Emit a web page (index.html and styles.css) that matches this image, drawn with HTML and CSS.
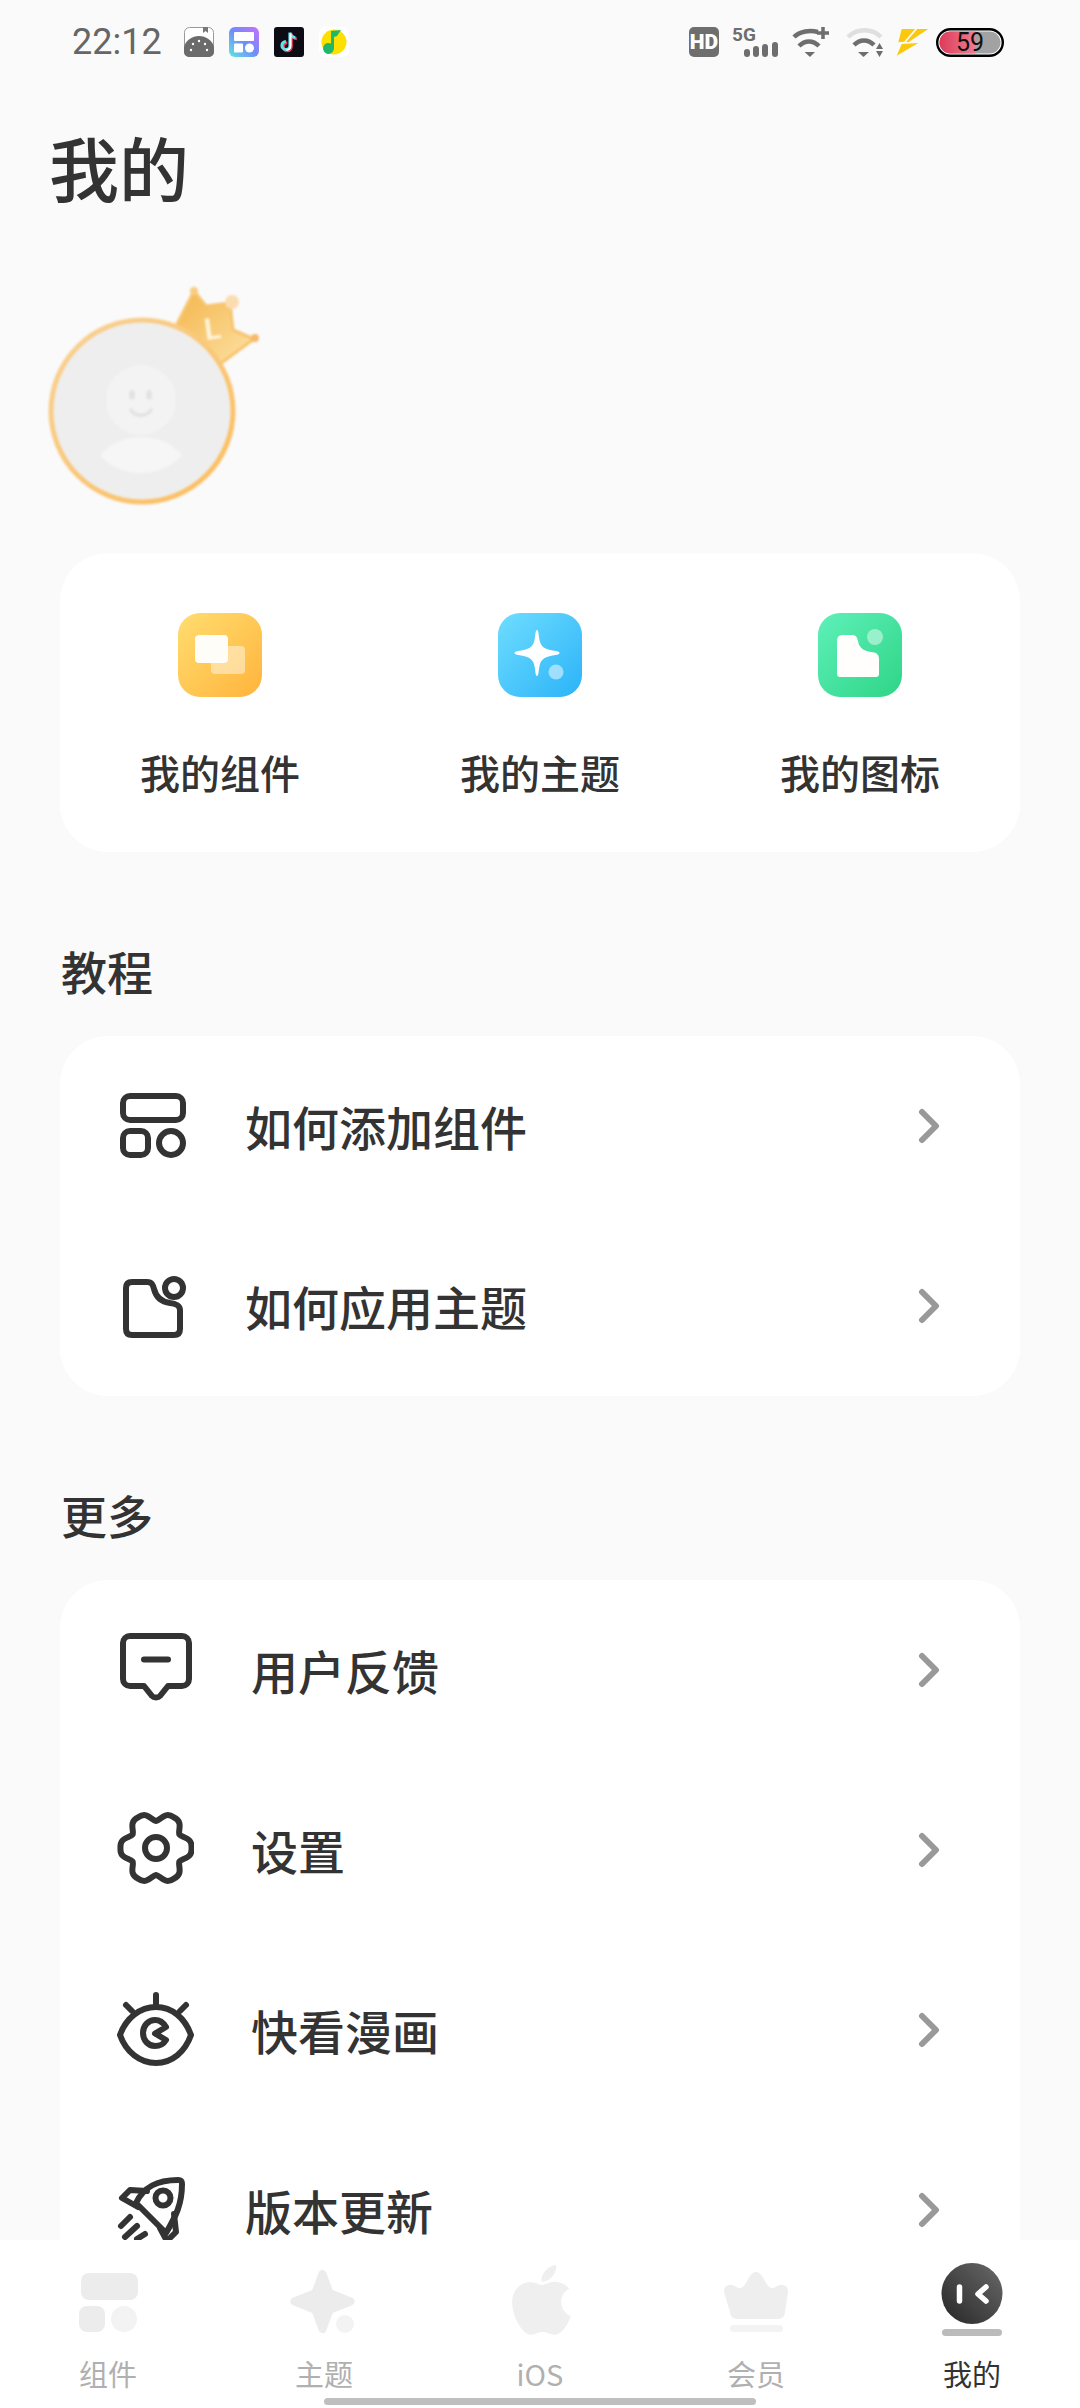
FILE: index.html
```html
<!DOCTYPE html>
<html lang="zh-CN">
<head>
  <meta charset="UTF-8" />
  <meta name="viewport" content="width=device-width, initial-scale=1.0" />
  <title>我的</title>
  <link rel="stylesheet" href="styles.css">
</head>
<body>
  <div id="page">
    <div id="scroll">
      <div id="status">
        <span class="time">22:12</span>
        <div class="status-apps">
          <svg width="30" height="30" viewBox="0 0 30 30"><rect x="0.5" y="0.5" width="29" height="29" rx="5" fill="#fff" stroke="#999"/><path d="M19 0h5v6l-2.500-2-2.500 2z" fill="#777"/><path d="M0 25v-5C2 13 8 9 15 9s13 4 15 11v5a5 5 0 0 1-5 5H5a5 5 0 0 1-5-5z" fill="#6b6b6b"/><g fill="#fff"><circle cx="15" cy="14" r="1.200"/><circle cx="9" cy="17" r="1.200"/><circle cx="21" cy="17" r="1.200"/><circle cx="7" cy="23" r="1.200"/><circle cx="23" cy="23" r="1.200"/></g></svg>
          <svg width="30" height="30" viewBox="0 0 30 30"><defs><linearGradient id="appA" x1="1" y1="0" x2="0" y2="1"><stop offset="0" stop-color="#c870f8"/><stop offset="0.5" stop-color="#6f8cfb"/><stop offset="1" stop-color="#5fe8e0"/></linearGradient></defs><rect width="30" height="30" rx="6" fill="url(#appA)"/><rect x="5" y="5" width="20" height="9" rx="1" fill="#fff"/><rect x="5" y="16.500" width="9" height="9" rx="1" fill="#fff"/><circle cx="20.500" cy="21" r="4.500" fill="#fff"/></svg>
          <svg width="30" height="30" viewBox="0 0 30 30"><rect width="30" height="30" rx="3" fill="#0c0c14"/><path d="M16.500 6v13a4 4 0 1 1-4-4M16.500 6c.5 3 3 5 5.500 5" fill="none" stroke="#f0385a" stroke-width="3" transform="translate(.8 .8)"/><path d="M16.500 6v13a4 4 0 1 1-4-4M16.500 6c.5 3 3 5 5.500 5" fill="none" stroke="#5fe6ea" stroke-width="3" transform="translate(-.6 -.6)"/><path d="M16.500 6.500v12.500a4 4 0 0 1-4 4" fill="none" stroke="#fff" stroke-width="2"/></svg>
          <svg width="30" height="30" viewBox="0 0 30 30"><rect width="30" height="30" rx="6" fill="#fff"/><circle cx="15" cy="15" r="12.500" fill="#fde000"/><path d="M12 4l10-1-4 6-3 1v11a5.500 5.500 0 1 1-3-4.500z" fill="#1fb869"/></svg>
        </div>
        <div class="status-right">
          <svg width="30" height="30" viewBox="0 0 30 30"><rect width="30" height="30" rx="5" fill="#6e6e6e"/><text x="15" y="22" text-anchor="middle" class="hd-text">HD</text></svg>
          <svg width="47" height="30" viewBox="0 0 47 30"><text x="0" y="14" class="net-text">5G</text><g fill="#6e6e6e"><rect x="12" y="22" width="6" height="8" rx="3"/><rect x="21" y="19" width="6" height="11" rx="3"/><rect x="30" y="17" width="6" height="13" rx="3"/><rect x="40" y="15" width="6" height="15" rx="3"/></g></svg>
          <svg width="37" height="30" viewBox="0 0 37 30"><g fill="none" stroke="#6e6e6e" stroke-width="4.500"><path d="M2 10C8 4 18 3 26 5"/><path d="M7 19c6-6 14-6 20 0"/></g><path d="M12.500 25h10.500l-5 5z" fill="#6e6e6e"/><path d="M31 0v12M25 6h12" stroke="#6e6e6e" stroke-width="3.500"/></svg>
          <svg class="wifi-dim" width="37" height="30" viewBox="0 0 37 30"><g fill="none" stroke-width="4.500"><path d="M2 10c9-9 24-9 33 0" stroke="#dfdfdf"/><path d="M8 18c6-6 14-6 20 0" stroke="#6e6e6e"/></g><path d="M12 25h11l-5.500 5z" fill="#6e6e6e"/><path d="M33.500 16l3.500 6h-7zM33.500 30l-3.500-6h7z" fill="#6e6e6e"/></svg>
          <svg width="32" height="27" viewBox="0 0 32 27"><path d="M5.700 0H19L8 12.700l-5.700.6zM21.300 0h11L12.300 13.300l-2-.6zM5.700 15l16.600-1L.7 26.700z" fill="#fcc80b"/></svg>
          <svg class="battery" width="68" height="29" viewBox="0 0 68 29"><defs><linearGradient id="batt" x1="0" x2="1"><stop offset="0" stop-color="#dc3a58"/><stop offset="1" stop-color="#ee7d92"/></linearGradient><clipPath id="battClip"><rect x="3.500" y="3.500" width="61" height="22" rx="11"/></clipPath></defs><rect x="1.200" y="1.200" width="65.600" height="26.600" rx="13.300" fill="#fff" stroke="#000" stroke-width="2.400"/><g clip-path="url(#battClip)"><rect x="3" y="3" width="62" height="23" fill="#a2a2a2"/><rect x="3" y="3" width="36.500" height="23" fill="url(#batt)"/></g><text x="34" y="23" text-anchor="middle" class="batt-text">59</text></svg>
        </div>
      </div>

      <h1 class="title">我的</h1>

      <svg class="avatar" width="220" height="220" viewBox="0 0 220 220">
        <defs>
          <linearGradient id="crown" x1="0" y1="0" x2="1" y2="1"><stop offset="0" stop-color="#f4b54a"/><stop offset="1" stop-color="#fde2a6"/></linearGradient>
          <linearGradient id="ring" x1="0" y1="0" x2="1" y2="1"><stop offset="0" stop-color="#f8d296"/><stop offset="1" stop-color="#fcbd5c"/></linearGradient>
        </defs>
        <path d="M146 6l12 15 24-3 3 27 21 9-34 25-44-38z" fill="url(#crown)" stroke="#f7c56f" stroke-width="3" stroke-linejoin="round"/>
        <circle cx="146" cy="6" r="4" fill="#f8cd7f"/>
        <circle cx="184" cy="17" r="7" fill="#fbdcb0"/>
        <circle cx="207" cy="53" r="4" fill="#f8b96a"/>
        <text x="156" y="54" class="crown-text" transform="rotate(-8 165 42)">L</text>
        <circle cx="94" cy="126" r="91" fill="#eeeeee" stroke="url(#ring)" stroke-width="5"/>
        <circle cx="93" cy="115" r="35" fill="#f3f3f3"/>
        <ellipse cx="84" cy="110" rx="3" ry="5" fill="#e2e2e2"/>
        <ellipse cx="101" cy="110" rx="3" ry="5" fill="#e2e2e2"/>
        <path d="M83 125c4 7 16 7 20 0" fill="none" stroke="#e2e2e2" stroke-width="3.500" stroke-linecap="round"/>
        <path d="M52 170c10-12 26-18 41-18s31 6 41 18c-10 12-26 18-41 18s-31-6-41-18z" fill="#f6f6f6"/>
      </svg>

      <div class="card quick">
        <div class="quick-item">
          <svg class="quick-icon" width="84" height="84" viewBox="0 0 84 84"><defs><linearGradient id="qa" x1="0" y1="0" x2="1" y2="1"><stop offset="0" stop-color="#ffdd70"/><stop offset="1" stop-color="#ffb43c"/></linearGradient></defs><rect width="84" height="84" rx="22" fill="url(#qa)"/><rect x="33" y="33" width="34" height="28" rx="4" fill="#fff" opacity="0.45"/><rect x="17" y="22" width="33" height="28" rx="4" fill="#fffdf8"/></svg>
          <span class="quick-label">我的组件</span>
        </div>
        <div class="quick-item">
          <svg class="quick-icon" width="84" height="84" viewBox="0 0 84 84"><defs><linearGradient id="qb" x1="0" y1="0" x2="1" y2="1"><stop offset="0" stop-color="#6fddff"/><stop offset="1" stop-color="#2bb3f8"/></linearGradient></defs><rect width="84" height="84" rx="22" fill="url(#qb)"/><path d="M39 17c1.500 0 1.500 4 2.500 10 1 6 5 9 11 10 2 .5 9 1 9 3s-7 2.500-9 3c-6 1-10 4-11 10-1 6-1 10-2.500 10s-1.500-4-2.500-10c-1-6-5-9-11-10-2-.5-9-1-9-3s7-2.500 9-3c6-1 10-4 11-10 1-6 1-10 2.500-10z" fill="#fff"/><circle cx="58" cy="59" r="7.500" fill="#fff" opacity="0.5"/></svg>
          <span class="quick-label">我的主题</span>
        </div>
        <div class="quick-item">
          <svg class="quick-icon" width="84" height="84" viewBox="0 0 84 84"><defs><linearGradient id="qc" x1="0" y1="0" x2="1" y2="1"><stop offset="0" stop-color="#5ff0ba"/><stop offset="1" stop-color="#2ed586"/></linearGradient></defs><rect width="84" height="84" rx="22" fill="url(#qc)"/><path d="M25 22h9c4 0 5 2 6 6 1 7 6 10 13 11 5 .5 8 2 8 7v15c0 2-1 3-3 3H22c-2 0-3-1-3-3V28c0-4 2-6 6-6z" fill="#fffefc"/><circle cx="57" cy="24" r="8" fill="#fff" opacity="0.45"/></svg>
          <span class="quick-label">我的图标</span>
        </div>
      </div>

      <h2 class="section">教程</h2>
      <div class="card">
        <div class="row">
          <svg class="row-icon" width="80" height="80" viewBox="0 0 80 80"><g fill="none" stroke="#333" stroke-width="6"><rect x="9" y="10" width="60" height="24" rx="7"/><rect x="9" y="45" width="25" height="24" rx="7"/><circle cx="57" cy="57" r="12"/></g></svg>
          <span class="row-text">如何添加组件</span>
          <svg class="chevron" width="24" height="36" viewBox="0 0 24 36"><path d="M4 4l14 14L4 32" fill="none" stroke="#999" stroke-width="6" stroke-linecap="round" stroke-linejoin="round"/></svg>
        </div>
        <div class="row">
          <svg class="row-icon" width="80" height="80" viewBox="0 0 80 80"><g fill="none" stroke="#333" stroke-width="6"><path d="M18 16h15c5 0 6 3 7 7 2 8 8 13 16 14 6 .5 10 3 10 7v19c0 4-2 6-6 6H18c-4 0-6-2-6-6V22c0-4 2-6 6-6z"/><circle cx="60" cy="22" r="9" fill="#fff"/></g></svg>
          <span class="row-text">如何应用主题</span>
          <svg class="chevron" width="24" height="36" viewBox="0 0 24 36"><path d="M4 4l14 14L4 32" fill="none" stroke="#999" stroke-width="6" stroke-linecap="round" stroke-linejoin="round"/></svg>
        </div>
      </div>

      <h2 class="section">更多</h2>
      <div class="card">
        <div class="row">
          <svg class="row-icon" width="80" height="80" viewBox="0 0 80 80"><g fill="none" stroke="#333" stroke-width="6" stroke-linecap="round" stroke-linejoin="round"><path d="M16 6H68c4 0 7 3 7 7v36c0 4-3 7-7 7H54l-8 10c-2 2-6 2-8 0l-8-10H16c-4 0-7-3-7-7V13c0-4 3-7 7-7z"/><path d="M30 29.500H54"/></g></svg>
          <span class="row-text row-text-wide">用户反馈</span>
          <svg class="chevron" width="24" height="36" viewBox="0 0 24 36"><path d="M4 4l14 14L4 32" fill="none" stroke="#999" stroke-width="6" stroke-linecap="round" stroke-linejoin="round"/></svg>
        </div>
        <div class="row">
          <svg class="row-icon" width="80" height="80" viewBox="0 0 80 80"><g fill="none" stroke="#333" stroke-width="6" stroke-linejoin="round"><path transform="translate(42 38)" d="M23.400-13.500C26-10 36.500-11 35.500 0C36.500 11 26 10 23.400 13.500C21.660 17.500 27.780 26.100 17.750 30.740C8.720 37.100 4.340 27.500 0 27C-4.340 27.500-8.720 37.100-17.750 30.740C-27.780 26.100-21.660 17.500-23.400 13.500C-26 10-36.500 11-35.500 0C-36.500-11-26-10-23.400-13.500C-21.660-17.500-27.780-26.100-17.750-30.740C-8.720-37.100-4.340-27.500 0-27C4.340-27.500 8.720-37.100 17.750-30.740C27.780-26.100 21.660-17.500 23.400-13.500Z"/><circle cx="42" cy="38" r="11"/></g></svg>
          <span class="row-text row-text-wide">设置</span>
          <svg class="chevron" width="24" height="36" viewBox="0 0 24 36"><path d="M4 4l14 14L4 32" fill="none" stroke="#999" stroke-width="6" stroke-linecap="round" stroke-linejoin="round"/></svg>
        </div>
        <div class="row">
          <svg class="row-icon" width="80" height="80" viewBox="0 0 80 80"><g fill="none" stroke="#333" stroke-width="6" stroke-linecap="round" stroke-linejoin="round"><path d="M6 45C12 28 26 17 42 17C58 17 71 28 77 45C71 62 58 73 42 73C26 73 12 62 6 45Z"/><path d="M42 5V16M12 15l6 6M72 15l-6 6"/><path d="M52 37C49 32 46 30 41 30C34 30 29 36 29 43C29 50 34 56 41 56C46 56 49 55 52 50L41 43.500Z"/></g></svg>
          <span class="row-text row-text-wide">快看漫画</span>
          <svg class="chevron" width="24" height="36" viewBox="0 0 24 36"><path d="M4 4l14 14L4 32" fill="none" stroke="#999" stroke-width="6" stroke-linecap="round" stroke-linejoin="round"/></svg>
        </div>
        <div class="row">
          <svg class="row-icon" width="80" height="80" viewBox="0 0 80 80"><g fill="none" stroke="#333" stroke-width="6" stroke-linecap="round" stroke-linejoin="round"><path d="M22 33C30 16 44 10 64 10C67 10 68 11 68 14C68 34 62 46 52 63Z"/><path d="M33 21L16 20L8 28L24 37M60 44L62 62L53 71L46 58"/><circle cx="49" cy="28" r="7.500"/><path d="M7 56l9-9M11 67l12-11M23 69l8-5"/></g></svg>
          <span class="row-text">版本更新</span>
          <svg class="chevron" width="24" height="36" viewBox="0 0 24 36"><path d="M4 4l14 14L4 32" fill="none" stroke="#999" stroke-width="6" stroke-linecap="round" stroke-linejoin="round"/></svg>
        </div>
      </div>
    </div>

    <nav id="tabs">
      <div class="tab">
        <svg width="80" height="80" viewBox="0 0 80 80"><rect x="13" y="13" width="57" height="27" rx="8" fill="#ececec"/><rect x="11" y="46" width="26" height="26" rx="8" fill="#ececec"/><circle cx="56" cy="59" r="13" fill="#f3f3f3"/></svg>
        <span class="tab-label">组件</span>
      </div>
      <div class="tab">
        <svg width="80" height="80" viewBox="0 0 80 80"><path d="M38.500 14l7 19 21 8.500-21 8.500-7 19-7-19-21-8.500 21-8.500z" fill="#ececec" stroke="#ececec" stroke-width="8" stroke-linejoin="round"/><circle cx="61" cy="64" r="9" fill="#f3f3f3"/></svg>
        <span class="tab-label">主题</span>
      </div>
      <div class="tab">
        <svg width="80" height="80" viewBox="0 0 80 80"><path transform="translate(11.500 0) scale(0.156)" d="M318.700 268.700c-.2-36.700 16.400-64.400 50-84.800-18.800-26.900-47.200-41.700-84.700-44.600-35.500-2.800-74.300 20.700-88.500 20.700-15 0-49.400-19.700-76.400-19.700C63.300 141.200 4 184.800 4 273.500q0 39.300 14.400 81.200c12.800 36.700 59 126.700 107.200 125.200 25.200-.6 43-17.900 75.800-17.900 31.800 0 48.300 17.900 76.400 17.900 48.600-.7 90.400-82.500 102.600-119.300-65.200-30.700-61.700-90-61.700-91.900zm-56.600-164.200c27.300-32.400 24.800-61.900 24-72.500-24.100 1.400-52 16.400-67.900 34.900-17.500 19.800-27.800 44.300-25.600 71.900 26.100 2 49.900-11.400 69.500-34.300z" fill="#efefef"/></svg>
        <span class="tab-label">iOS</span>
      </div>
      <div class="tab">
        <svg width="80" height="80" viewBox="0 0 80 80"><path d="M40 12c4 0 6 4 9 9 3 6 6 8 9 7 3-2 6-4 9-3 4 1 5 3 5 7l-3 20c-.5 5-3 7-8 7H22c-5 0-7.500-2-8-7L8 32c0-4 1-6 5-7 3-1 6 1 9 3 3 1 6-1 9-7 3-5 5-9 9-9z" fill="#eeeeee"/><rect x="14" y="65" width="53" height="7" rx="3.500" fill="#f3f3f3"/></svg>
        <span class="tab-label">会员</span>
      </div>
      <div class="tab tab-active">
        <svg width="80" height="80" viewBox="0 0 80 80"><defs><linearGradient id="me" x1="0" y1="1" x2="1" y2="0"><stop offset="0" stop-color="#262626"/><stop offset="1" stop-color="#6a6a6a"/></linearGradient></defs><circle cx="40" cy="33.500" r="30.500" fill="url(#me)"/><path d="M27.500 27v14M54 27l-8 7 8 7" fill="none" stroke="#fff" stroke-width="5.500" stroke-linecap="round" stroke-linejoin="round"/><rect x="10" y="69" width="60" height="7" rx="3.500" fill="#bbbbbb"/></svg>
        <span class="tab-label">我的</span>
      </div>
      <div class="home-bar"></div>
    </nav>
  </div>
</body>
</html>
```

FILE: styles.css
```css
body {
  margin: 0;
  padding: 0;
  background: #fafafa;
  color: #333;
  font-family: "Noto Sans CJK SC", "Noto Sans", sans-serif;
}

#page {
  width: 1080px;
  height: 2408px;
  display: flex;
  flex-direction: column;
  overflow: hidden;
}

#scroll {
  flex: 1;
  min-height: 0;
}

#status {
  display: flex;
  align-items: center;
  height: 30px;
  padding: 27px 76px 0 72px;
}

.time {
  font-family: Roboto, sans-serif;
  font-size: 36px;
  color: #666;
  margin-right: 22px;
}

.status-apps {
  display: flex;
  gap: 15px;
}

.status-right {
  display: flex;
  align-items: center;
  gap: 13px;
  margin-left: auto;
}

.status-right svg {
  overflow: visible;
}

.wifi-dim {
  margin-left: 4px;
}

.battery {
  margin-left: -5px;
}

.hd-text {
  font-family: Roboto, sans-serif;
  font-size: 21px;
  font-weight: 900;
  fill: #fff;
}

.net-text {
  font-family: Roboto, sans-serif;
  font-size: 19px;
  font-weight: 700;
  fill: #6e6e6e;
}

.batt-text {
  font-family: Roboto, sans-serif;
  font-size: 25px;
  fill: #111;
}

.title {
  margin: 60px 0 0 49px;
  font-size: 70px;
  line-height: 100px;
  font-weight: 500;
  color: #333;
}

.avatar {
  display: block;
  margin: 68px 0 0 48px;
  overflow: visible;
  filter: blur(0.8px);
}

.crown-text {
  font-family: Roboto, sans-serif;
  font-size: 30px;
  font-weight: 700;
  fill: #fff3d6;
}

.card {
  margin: 0 60px;
  background: #fff;
  border-radius: 48px;
}

.quick {
  display: flex;
  height: 299px;
  margin-top: 48px;
}

.quick-item {
  flex: 1;
  display: flex;
  flex-direction: column;
  align-items: center;
  padding-top: 60px;
}

.quick-label {
  margin-top: 46px;
  font-size: 40px;
  line-height: 58px;
  font-weight: 500;
}

.section {
  margin: 88px 0 0 61px;
  font-size: 46px;
  line-height: 60px;
  font-weight: 500;
  height: 60px;
}

.section + .card {
  margin-top: 36px;
}

.row {
  display: flex;
  align-items: center;
  height: 180px;
  padding: 0 78px 0 54px;
}

.row-text {
  margin-left: 51px;
  font-size: 47px;
  line-height: 50px;
  font-weight: 500;
}

.row-text-wide {
  margin-left: 57px;
}

.chevron {
  margin-left: auto;
}

/* sits over the end of the list, the last row runs on behind it */
#tabs {
  position: relative;
  display: flex;
  flex: none;
  height: 168px;
  background: #fff;
}

.tab {
  flex: 1;
  display: flex;
  flex-direction: column;
  align-items: center;
  padding-top: 20px;
}

.tab-label {
  margin-top: 13px;
  font-size: 29px;
  line-height: 40px;
  color: #b0b0b0;
}

.tab-active .tab-label {
  color: #333;
}

.home-bar {
  position: absolute;
  left: 324px;
  bottom: 3px;
  width: 432px;
  height: 7px;
  border-radius: 4px;
  background: #bfbfbf;
}
```
